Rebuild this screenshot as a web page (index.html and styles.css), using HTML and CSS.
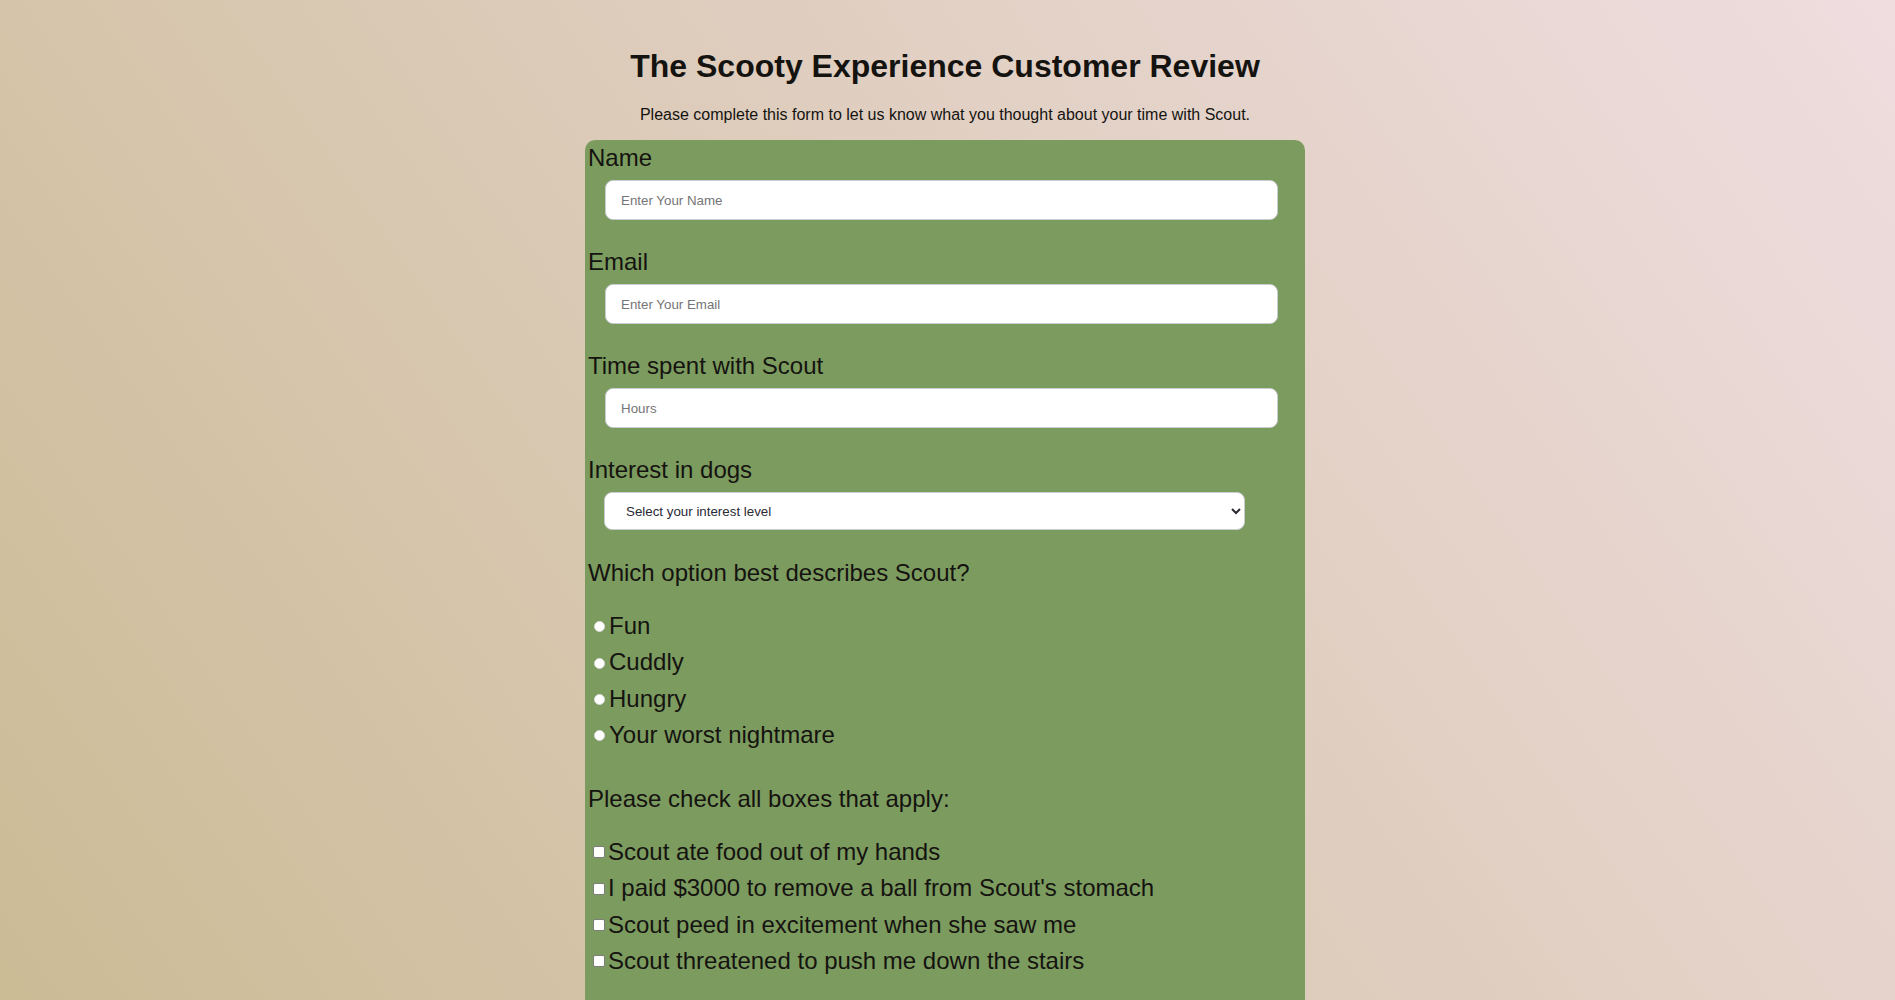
FILE: index.html
```html
<!DOCTYPE html>
<html lang="en">
<head>
<meta charset="utf-8">
<title>The Scooty Experience Customer Review</title>
<link rel="stylesheet" href="styles.css">
</head>
<body>
<main class="page">
  <header class="intro">
    <h1 class="title">The Scooty Experience Customer Review</h1>
    <p class="lead">Please complete this form to let us know what you thought about your time with Scout.</p>
  </header>
  <form class="survey">
    <div class="field">
      <label class="field-label" for="name">Name</label>
      <input class="text-input" id="name" type="text" placeholder="Enter Your Name">
    </div>
    <div class="field">
      <label class="field-label" for="email">Email</label>
      <input class="text-input" id="email" type="email" placeholder="Enter Your Email">
    </div>
    <div class="field">
      <label class="field-label" for="hours">Time spent with Scout</label>
      <input class="text-input" id="hours" type="number" placeholder="Hours">
    </div>
    <div class="field field-select">
      <label class="field-label" for="interest">Interest in dogs</label>
      <select class="select-input" id="interest">
        <option>Select your interest level</option>
        <option>Low</option>
        <option>Medium</option>
        <option>High</option>
      </select>
    </div>
    <div class="group">
      <p class="group-title">Which option best describes Scout?</p>
      <div class="choices">
        <label class="choice"><input class="radio" type="radio" name="describe" value="fun">Fun</label>
        <label class="choice"><input class="radio" type="radio" name="describe" value="cuddly">Cuddly</label>
        <label class="choice"><input class="radio" type="radio" name="describe" value="hungry">Hungry</label>
        <label class="choice"><input class="radio" type="radio" name="describe" value="nightmare">Your worst nightmare</label>
      </div>
    </div>
    <div class="group">
      <p class="group-title">Please check all boxes that apply:</p>
      <div class="choices">
        <label class="choice"><input class="check" type="checkbox" value="food">Scout ate food out of my hands</label>
        <label class="choice"><input class="check" type="checkbox" value="ball">I paid $3000 to remove a ball from Scout's stomach</label>
        <label class="choice"><input class="check" type="checkbox" value="peed">Scout peed in excitement when she saw me</label>
        <label class="choice"><input class="check" type="checkbox" value="stairs">Scout threatened to push me down the stairs</label>
      </div>
    </div>
    <div class="field">
      <label class="field-label" for="comments">Any additional comments?</label>
      <textarea class="text-area" id="comments" placeholder="Enter your comments here..."></textarea>
    </div>
    <button class="submit" type="submit">Submit</button>
  </form>
</main>
</body>
</html>
```

FILE: styles.css
```css
* {
  box-sizing: border-box;
}

body {
  margin: 0;
  font-family: "Liberation Sans", Arial, sans-serif;
  color: #151310;
  background: linear-gradient(55deg, #cbbb95 0%, #efdde0 100%) fixed;
  min-height: 100vh;
}

.page {
  display: flex;
  flex-direction: column;
  align-items: center;
  padding: 48px 5px 40px 0;
}

.intro {
  display: flex;
  flex-direction: column;
  align-items: center;
}

.title {
  margin: 0;
  font-size: 32px;
  font-weight: bold;
  line-height: normal;
}

.lead {
  margin: 21px 0 16px;
  font-size: 16px;
  line-height: normal;
}

.survey {
  width: 720px;
  background: #7c9b5f;
  border-radius: 10px;
  padding: 4px 3px 60px;
  display: flex;
  flex-direction: column;
  align-items: flex-start;
}

.field {
  display: flex;
  flex-direction: column;
  align-items: flex-start;
  margin-bottom: 28px;
}

.field-select {
  margin-bottom: 29px;
}

.field-label {
  font-size: 24px;
  line-height: normal;
}

.text-input {
  margin: 8px 0 0 17px;
  width: 673px;
  height: 40px;
  border: 1px solid #c9ccd1;
  border-radius: 8px;
  background: #fff;
  padding: 0 15px;
  font-family: "Liberation Sans", Arial, sans-serif;
  font-size: 13.33px;
  color: #222;
}

.text-input::placeholder,
.text-area::placeholder {
  color: #757575;
}

.select-input {
  margin: 8px 0 0 16px;
  width: 641px;
  height: 38px;
  border: 1px solid #c9ccd1;
  border-radius: 8px;
  background: #fff;
  padding: 0 16px 0 17px;
  font-family: "Liberation Sans", Arial, sans-serif;
  font-size: 13.33px;
  color: #2a2a35;
}

.group {
  display: flex;
  flex-direction: column;
  align-items: flex-start;
  margin-bottom: 36px;
}

.group-title {
  margin: 0 0 24.8px;
  font-size: 24px;
  line-height: normal;
}

.choices {
  display: flex;
  flex-direction: column;
  gap: 8.4px;
}

.choice {
  display: flex;
  align-items: center;
  font-size: 24px;
  line-height: normal;
}

.radio {
  appearance: none;
  -webkit-appearance: none;
  width: 11px;
  height: 11px;
  margin: 2px 4px 0 6px;
  border-radius: 50%;
  background: #fff;
  border: 1px solid #dcdcdc;
  flex: none;
}

.check {
  appearance: none;
  -webkit-appearance: none;
  width: 12px;
  height: 12px;
  margin: 1px 3px 0 5px;
  border-radius: 2px;
  background: #fff;
  border: 1px solid #7d7d7d;
  flex: none;
}

.text-area {
  margin: 8px 0 0 17px;
  width: 673px;
  height: 120px;
  border: 1px solid #c9ccd1;
  border-radius: 8px;
  padding: 12px 15px;
  font-family: "Liberation Sans", Arial, sans-serif;
  font-size: 13.33px;
  resize: vertical;
}

.submit {
  margin-left: 17px;
  padding: 10px 24px;
  font-family: "Liberation Sans", Arial, sans-serif;
  font-size: 16px;
  border: 1px solid #c9ccd1;
  border-radius: 8px;
  background: #fff;
  color: #151310;
}
```
